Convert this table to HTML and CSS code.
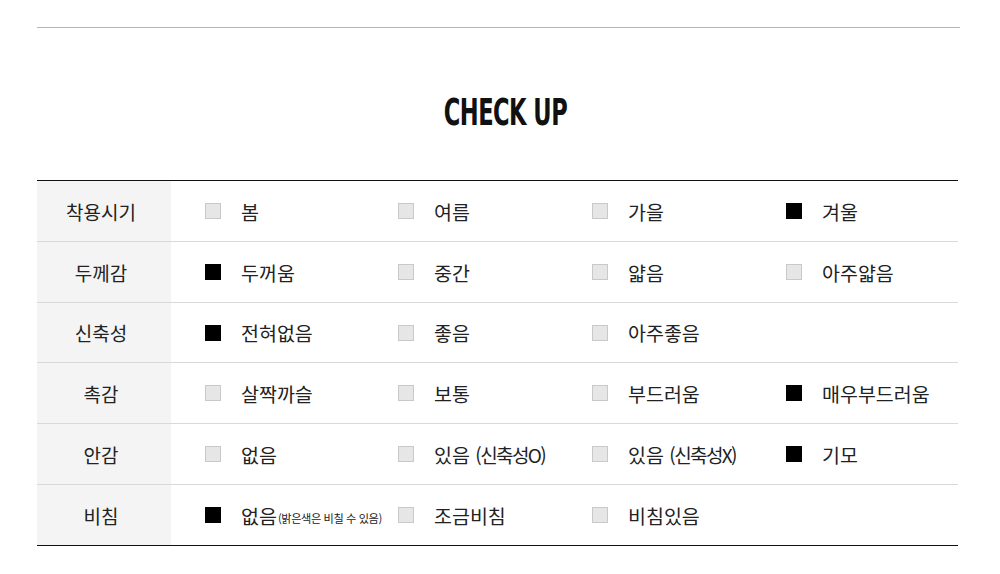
FILE: index.html
```html
<!DOCTYPE html>
<html lang="ko">
<head>
    <meta charset="UTF-8">
    <meta name="viewport" content="width=device-width, initial-scale=1.0">
    <title>Check Up</title>
    <link rel="stylesheet" href="styles.css">
</head>
<body>

<div class="container">
    <hr class="topline">
    <h2 class="title"><span>CHECK UP</span></h2>

    <table class="checkup">
        <tbody>
            <tr>
                <th>착용시기</th>
                <td>
                    <div class="opts">
                        <div class="opt"><i class="box"></i>봄</div>
                        <div class="opt"><i class="box"></i>여름</div>
                        <div class="opt"><i class="box"></i>가을</div>
                        <div class="opt"><i class="box on"></i>겨울</div>
                    </div>
                </td>
            </tr>
            <tr>
                <th>두께감</th>
                <td>
                    <div class="opts">
                        <div class="opt"><i class="box on"></i>두꺼움</div>
                        <div class="opt"><i class="box"></i>중간</div>
                        <div class="opt"><i class="box"></i>얇음</div>
                        <div class="opt"><i class="box"></i>아주얇음</div>
                    </div>
                </td>
            </tr>
            <tr class="short">
                <th>신축성</th>
                <td>
                    <div class="opts">
                        <div class="opt"><i class="box on"></i>전혀없음</div>
                        <div class="opt"><i class="box"></i>좋음</div>
                        <div class="opt"><i class="box"></i>아주좋음</div>
                    </div>
                </td>
            </tr>
            <tr>
                <th>촉감</th>
                <td>
                    <div class="opts">
                        <div class="opt"><i class="box"></i>살짝까슬</div>
                        <div class="opt"><i class="box"></i>보통</div>
                        <div class="opt"><i class="box"></i>부드러움</div>
                        <div class="opt"><i class="box on"></i>매우부드러움</div>
                    </div>
                </td>
            </tr>
            <tr>
                <th>안감</th>
                <td>
                    <div class="opts">
                        <div class="opt"><i class="box"></i>없음</div>
                        <div class="opt"><i class="box"></i>있음&nbsp;<span class="paren">(신축성O)</span></div>
                        <div class="opt"><i class="box"></i>있음&nbsp;<span class="paren">(신축성X)</span></div>
                        <div class="opt"><i class="box on"></i>기모</div>
                    </div>
                </td>
            </tr>
            <tr>
                <th>비침</th>
                <td>
                    <div class="opts">
                        <div class="opt"><i class="box on"></i>없음<small>(밝은색은 비칠 수 있음)</small></div>
                        <div class="opt"><i class="box"></i>조금비침</div>
                        <div class="opt"><i class="box"></i>비침있음</div>
                    </div>
                </td>
            </tr>
        </tbody>
    </table>
</div>

</body>
</html>
```

FILE: styles.css
```css
body {
    margin: 0;
    background: #fff;
    font-family: "Noto Sans CJK KR", "Noto Sans", sans-serif;
    color: #222;
}
.container {
    width: 923px;
    margin: 0 0 0 37px;
    padding-top: 27px;
}
.topline {
    margin: 0;
    border: none;
    border-top: 1px solid #b5b5b5;
}
.title {
    margin: 0;
    height: 152px;
    display: flex;
    align-items: center;
    justify-content: center;
    padding: 16px 0 0 14px;
    box-sizing: border-box;
}
.title span {
    display: inline-block;
    font-family: "DejaVu Sans Condensed", "DejaVu Sans", sans-serif;
    font-weight: bold;
    font-size: 38px;
    letter-spacing: -0.8px;
    color: #111;
    transform: scaleX(0.66);
}
.checkup {
    width: 921px;
    border-collapse: collapse;
    border-top: 1px solid #111;
    border-bottom: 1px solid #111;
}
.checkup th, .checkup td {
    height: 60px;
    padding: 0;
    border-top: 1px solid #d9d9d9;
}
.checkup tr:first-child th, .checkup tr:first-child td {
    border-top: none;
}
.checkup tr.short th, .checkup tr.short td {
    height: 59px;
}
.checkup th {
    width: 128px;
    padding-right: 6px;
    background: #f4f4f4;
    font-weight: normal;
    font-size: 19px;
    text-align: center;
    color: #222;
}
.opts {
    display: grid;
    grid-template-columns: 193px 194px 194px 1fr;
    padding-left: 34px;
}
.opt {
    display: flex;
    align-items: center;
    font-size: 19.5px;
    white-space: nowrap;
}
.box {
    display: inline-block;
    width: 16px;
    height: 16px;
    box-sizing: border-box;
    background: #e6e6e6;
    border: 1px solid #c9c9c9;
    margin-right: 20px;
    flex-shrink: 0;
}
.box.on {
    background: #000;
    border-color: #000;
}
.paren {
    font-size: 19px;
    letter-spacing: -1.6px;
}
.opt small {
    font-size: 11.2px;
    letter-spacing: -0.4px;
    margin-left: 1px;
    padding-top: 5px;
}
```
